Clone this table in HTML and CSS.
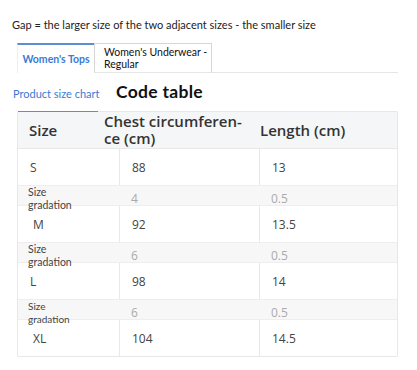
FILE: index.html
```html
<!DOCTYPE html>
<html lang="en">
<head>
    <meta charset="UTF-8">
    <meta name="viewport" content="width=device-width, initial-scale=1.0">
    <title>Size chart</title>
    <link rel="stylesheet" href="styles.css">
</head>
<body>
    <p class="note">Gap = the larger size of the two adjacent sizes - the smaller size</p>

    <div class="tabs">
        <div class="tab active">Women's Tops</div>
        <div class="tab">Women's Underwear -<br>Regular</div>
    </div>

    <div class="subnav">
        <span class="sublink">Product size chart</span>
        <span class="subtitle">Code table</span>
    </div>

    <div class="chart">
        <div class="chart-head">
            <div>Size</div>
            <div>Chest circumferen-ce (cm)</div>
            <div>Length (cm)</div>
        </div>
        <div class="row">
            <div>S</div><div>88</div><div>13</div>
        </div>
        <div class="row gap">
            <div class="gap-label">Size<br>gradation</div><div>4</div><div>0.5</div>
        </div>
        <div class="row">
            <div>&nbsp;M</div><div>92</div><div>13.5</div>
        </div>
        <div class="row gap">
            <div class="gap-label">Size<br>gradation</div><div>6</div><div>0.5</div>
        </div>
        <div class="row">
            <div>L</div><div>98</div><div>14</div>
        </div>
        <div class="row gap">
            <div class="gap-label small">Size<br>gradation</div><div>6</div><div>0.5</div>
        </div>
        <div class="row">
            <div>&nbsp;XL</div><div>104</div><div>14.5</div>
        </div>
    </div>
</body>
</html>
```

FILE: styles.css
```css
body { margin: 0; background: #fff; font-family: Lato, "Open Sans", sans-serif; color: #222; }

.note { margin: 0; padding: 18px 0 0 12px; font-size: 11px; line-height: 14px; }

.tabs { display: flex; margin: 11px 19px 0 17px; height: 29px; border-bottom: 1px solid #e6e6e6; }
.tab { box-sizing: border-box; height: 30px; font-size: 10.5px; line-height: 12px; display: flex; align-items: center; white-space: nowrap; }
.tab.active { width: 77px; justify-content: center; color: #3a7bd5; font-weight: bold; border-top: 2px solid #5b8fd0; border-left: 1px solid #eee; background: #fff; }
.tab:not(.active) { width: 118px; padding-left: 9px; border: 1px solid #d6d6d6; border-bottom-color: #e6e6e6; color: #111; }

.subnav { display: flex; align-items: baseline; padding: 8px 0 0 13px; height: 32px; box-sizing: border-box; }
.sublink { font-size: 11px; color: #3a7bd5; width: 103px; }
.subtitle { font-size: 17.5px; font-weight: bold; letter-spacing: 0.3px; color: #111; }

.chart { margin: 6px 19px 0 17px; border: 1px solid #e8e8e8; border-top: none; border-radius: 2px; font-family: "Open Sans", sans-serif; position: relative; }
.chart::before { content: ""; position: absolute; left: 0; top: 0; width: 80px; height: 1px; background: #5b8fd0; }

.chart-head { display: grid; grid-template-columns: 75px 156px 1fr; height: 38px; box-sizing: border-box; background: #f5f6f7; border-top: 1px solid #e8e8e8; border-bottom: 1px solid #e8e8e8; font-size: 15px; font-weight: 600; color: #333; align-items: center; line-height: 17px; }
.chart-head div { padding-left: 11px; }

.row { display: grid; grid-template-columns: 101px 140px 1fr; height: 36px; align-items: center; font-size: 12px; color: #444; }
.row div { height: 100%; display: flex; align-items: center; padding-left: 12px; }
.row div + div { border-left: 1px solid #e8e8e8; padding-left: 12px; }
.row.gap { height: 21px; background: #f7f7f7; border-top: 1px solid #eee; border-bottom: 1px solid #eee; box-sizing: border-box; color: #aaa; }
.row.gap div + div { border-left: none; }
.gap-label { font-family: Lato, sans-serif; font-size: 10.5px; line-height: 12.5px; color: #444; padding-left: 10px !important; }
.gap-label.small { font-size: 10px; }
```
